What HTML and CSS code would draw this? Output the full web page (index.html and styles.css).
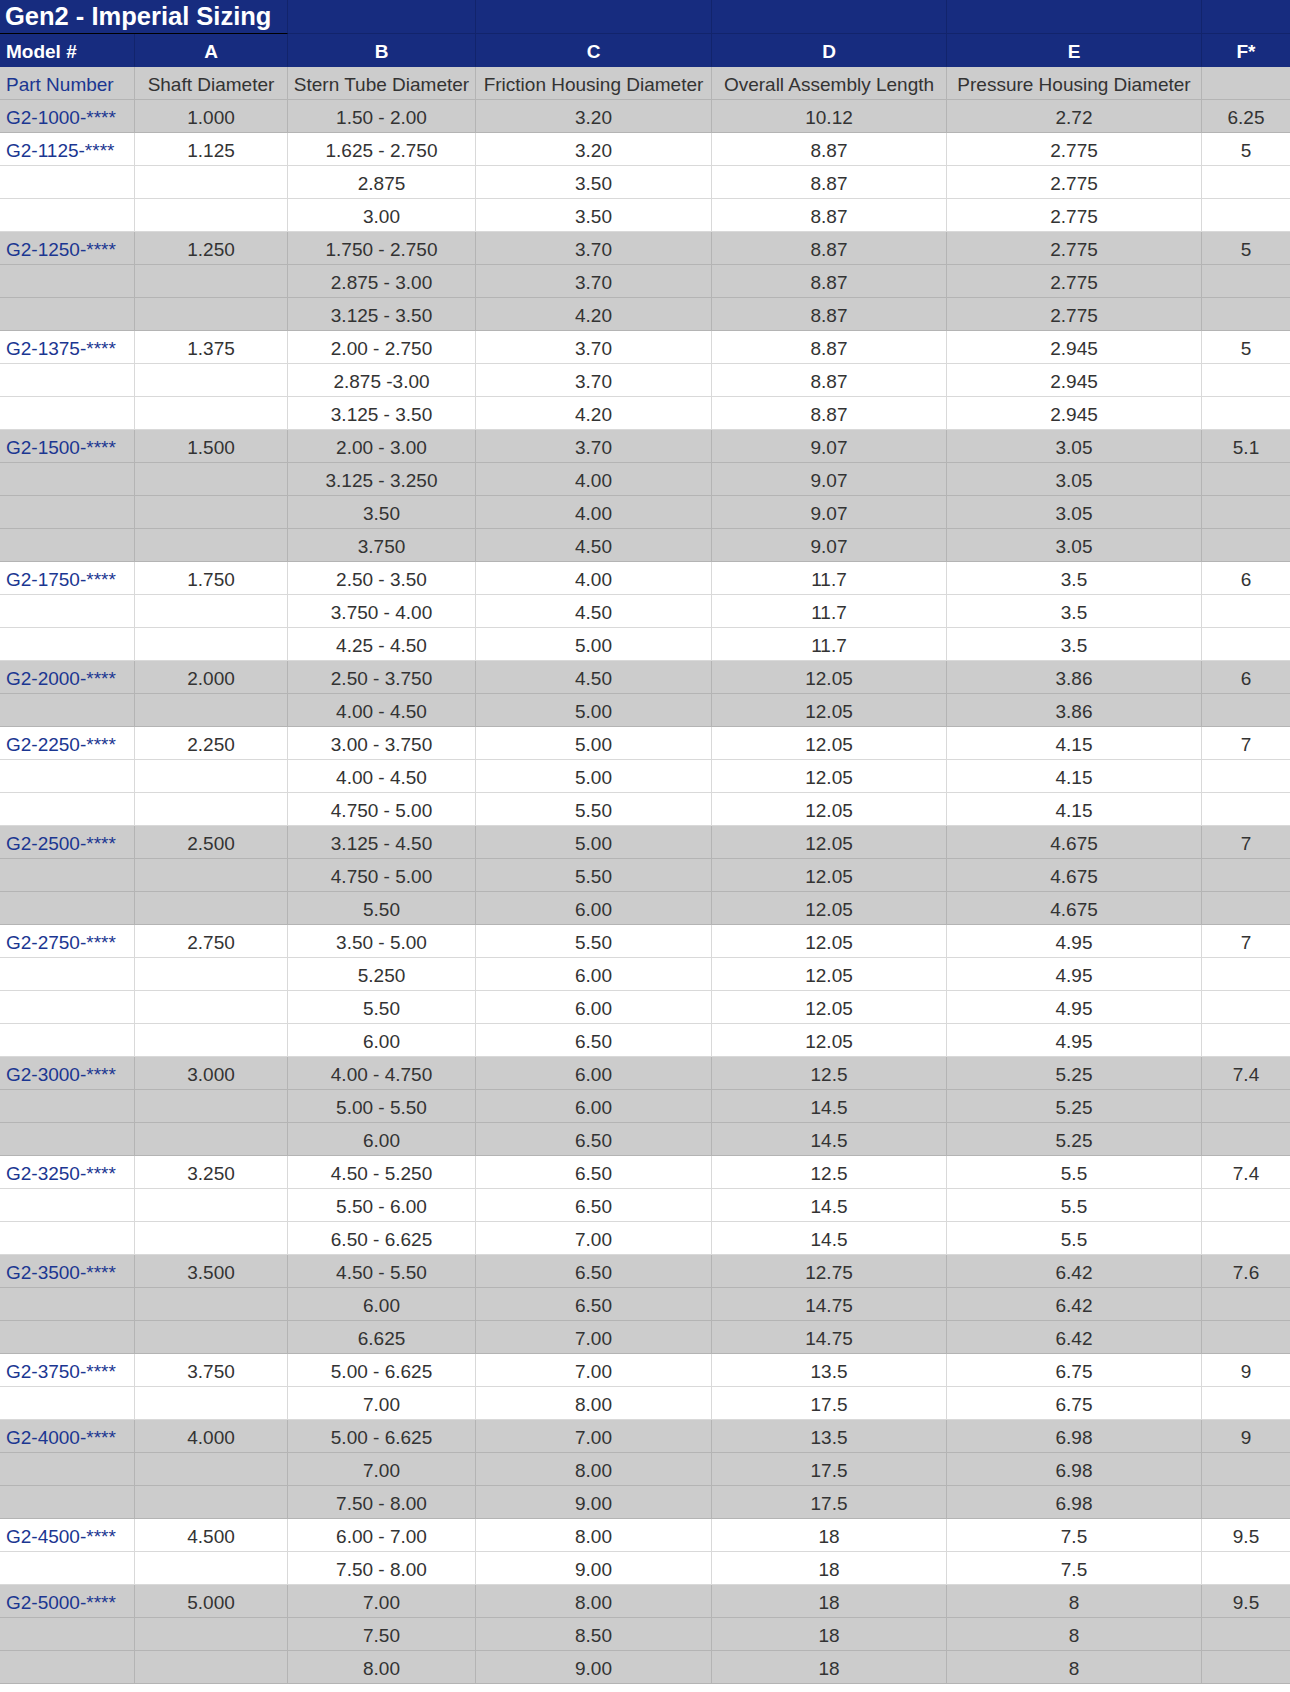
FILE: index.html
```html
<!DOCTYPE html>
<html>
<head>
<meta charset="utf-8">
<link rel="stylesheet" href="styles.css">
</head>
<body>
<div class="sheet">
  <div class="row title-row">
    <div class="c title">Gen2 - Imperial Sizing</div>
    <div class="c"></div><div class="c"></div><div class="c"></div><div class="c"></div><div class="c"></div>
  </div>
  <div class="row head-row">
    <div class="c left">Model #</div>
    <div class="c">A</div><div class="c">B</div><div class="c">C</div><div class="c">D</div><div class="c">E</div><div class="c">F*</div>
  </div>
  <div class="row g">
    <div class="c left pn">Part Number</div>
    <div class="c">Shaft Diameter</div><div class="c">Stern Tube Diameter</div><div class="c">Friction Housing Diameter</div><div class="c">Overall Assembly Length</div><div class="c">Pressure Housing Diameter</div><div class="c"></div>
  </div>

  <div class="row g"><div class="c left pn">G2-1000-****</div><div class="c">1.000</div><div class="c">1.50 - 2.00</div><div class="c">3.20</div><div class="c">10.12</div><div class="c">2.72</div><div class="c">6.25</div></div>

  <div class="row w"><div class="c left pn">G2-1125-****</div><div class="c">1.125</div><div class="c">1.625 - 2.750</div><div class="c">3.20</div><div class="c">8.87</div><div class="c">2.775</div><div class="c">5</div></div>
  <div class="row w"><div class="c left"></div><div class="c"></div><div class="c">2.875</div><div class="c">3.50</div><div class="c">8.87</div><div class="c">2.775</div><div class="c"></div></div>
  <div class="row w"><div class="c left"></div><div class="c"></div><div class="c">3.00</div><div class="c">3.50</div><div class="c">8.87</div><div class="c">2.775</div><div class="c"></div></div>

  <div class="row g"><div class="c left pn">G2-1250-****</div><div class="c">1.250</div><div class="c">1.750 - 2.750</div><div class="c">3.70</div><div class="c">8.87</div><div class="c">2.775</div><div class="c">5</div></div>
  <div class="row g"><div class="c left"></div><div class="c"></div><div class="c">2.875 - 3.00</div><div class="c">3.70</div><div class="c">8.87</div><div class="c">2.775</div><div class="c"></div></div>
  <div class="row g"><div class="c left"></div><div class="c"></div><div class="c">3.125 - 3.50</div><div class="c">4.20</div><div class="c">8.87</div><div class="c">2.775</div><div class="c"></div></div>

  <div class="row w"><div class="c left pn">G2-1375-****</div><div class="c">1.375</div><div class="c">2.00 - 2.750</div><div class="c">3.70</div><div class="c">8.87</div><div class="c">2.945</div><div class="c">5</div></div>
  <div class="row w"><div class="c left"></div><div class="c"></div><div class="c">2.875 -3.00</div><div class="c">3.70</div><div class="c">8.87</div><div class="c">2.945</div><div class="c"></div></div>
  <div class="row w"><div class="c left"></div><div class="c"></div><div class="c">3.125 - 3.50</div><div class="c">4.20</div><div class="c">8.87</div><div class="c">2.945</div><div class="c"></div></div>

  <div class="row g"><div class="c left pn">G2-1500-****</div><div class="c">1.500</div><div class="c">2.00 - 3.00</div><div class="c">3.70</div><div class="c">9.07</div><div class="c">3.05</div><div class="c">5.1</div></div>
  <div class="row g"><div class="c left"></div><div class="c"></div><div class="c">3.125 - 3.250</div><div class="c">4.00</div><div class="c">9.07</div><div class="c">3.05</div><div class="c"></div></div>
  <div class="row g"><div class="c left"></div><div class="c"></div><div class="c">3.50</div><div class="c">4.00</div><div class="c">9.07</div><div class="c">3.05</div><div class="c"></div></div>
  <div class="row g"><div class="c left"></div><div class="c"></div><div class="c">3.750</div><div class="c">4.50</div><div class="c">9.07</div><div class="c">3.05</div><div class="c"></div></div>

  <div class="row w"><div class="c left pn">G2-1750-****</div><div class="c">1.750</div><div class="c">2.50 - 3.50</div><div class="c">4.00</div><div class="c">11.7</div><div class="c">3.5</div><div class="c">6</div></div>
  <div class="row w"><div class="c left"></div><div class="c"></div><div class="c">3.750 - 4.00</div><div class="c">4.50</div><div class="c">11.7</div><div class="c">3.5</div><div class="c"></div></div>
  <div class="row w"><div class="c left"></div><div class="c"></div><div class="c">4.25 - 4.50</div><div class="c">5.00</div><div class="c">11.7</div><div class="c">3.5</div><div class="c"></div></div>

  <div class="row g"><div class="c left pn">G2-2000-****</div><div class="c">2.000</div><div class="c">2.50 - 3.750</div><div class="c">4.50</div><div class="c">12.05</div><div class="c">3.86</div><div class="c">6</div></div>
  <div class="row g"><div class="c left"></div><div class="c"></div><div class="c">4.00 - 4.50</div><div class="c">5.00</div><div class="c">12.05</div><div class="c">3.86</div><div class="c"></div></div>

  <div class="row w"><div class="c left pn">G2-2250-****</div><div class="c">2.250</div><div class="c">3.00 - 3.750</div><div class="c">5.00</div><div class="c">12.05</div><div class="c">4.15</div><div class="c">7</div></div>
  <div class="row w"><div class="c left"></div><div class="c"></div><div class="c">4.00 - 4.50</div><div class="c">5.00</div><div class="c">12.05</div><div class="c">4.15</div><div class="c"></div></div>
  <div class="row w"><div class="c left"></div><div class="c"></div><div class="c">4.750 - 5.00</div><div class="c">5.50</div><div class="c">12.05</div><div class="c">4.15</div><div class="c"></div></div>

  <div class="row g"><div class="c left pn">G2-2500-****</div><div class="c">2.500</div><div class="c">3.125 - 4.50</div><div class="c">5.00</div><div class="c">12.05</div><div class="c">4.675</div><div class="c">7</div></div>
  <div class="row g"><div class="c left"></div><div class="c"></div><div class="c">4.750 - 5.00</div><div class="c">5.50</div><div class="c">12.05</div><div class="c">4.675</div><div class="c"></div></div>
  <div class="row g"><div class="c left"></div><div class="c"></div><div class="c">5.50</div><div class="c">6.00</div><div class="c">12.05</div><div class="c">4.675</div><div class="c"></div></div>

  <div class="row w"><div class="c left pn">G2-2750-****</div><div class="c">2.750</div><div class="c">3.50 - 5.00</div><div class="c">5.50</div><div class="c">12.05</div><div class="c">4.95</div><div class="c">7</div></div>
  <div class="row w"><div class="c left"></div><div class="c"></div><div class="c">5.250</div><div class="c">6.00</div><div class="c">12.05</div><div class="c">4.95</div><div class="c"></div></div>
  <div class="row w"><div class="c left"></div><div class="c"></div><div class="c">5.50</div><div class="c">6.00</div><div class="c">12.05</div><div class="c">4.95</div><div class="c"></div></div>
  <div class="row w"><div class="c left"></div><div class="c"></div><div class="c">6.00</div><div class="c">6.50</div><div class="c">12.05</div><div class="c">4.95</div><div class="c"></div></div>

  <div class="row g"><div class="c left pn">G2-3000-****</div><div class="c">3.000</div><div class="c">4.00 - 4.750</div><div class="c">6.00</div><div class="c">12.5</div><div class="c">5.25</div><div class="c">7.4</div></div>
  <div class="row g"><div class="c left"></div><div class="c"></div><div class="c">5.00 - 5.50</div><div class="c">6.00</div><div class="c">14.5</div><div class="c">5.25</div><div class="c"></div></div>
  <div class="row g"><div class="c left"></div><div class="c"></div><div class="c">6.00</div><div class="c">6.50</div><div class="c">14.5</div><div class="c">5.25</div><div class="c"></div></div>

  <div class="row w"><div class="c left pn">G2-3250-****</div><div class="c">3.250</div><div class="c">4.50 - 5.250</div><div class="c">6.50</div><div class="c">12.5</div><div class="c">5.5</div><div class="c">7.4</div></div>
  <div class="row w"><div class="c left"></div><div class="c"></div><div class="c">5.50 - 6.00</div><div class="c">6.50</div><div class="c">14.5</div><div class="c">5.5</div><div class="c"></div></div>
  <div class="row w"><div class="c left"></div><div class="c"></div><div class="c">6.50 - 6.625</div><div class="c">7.00</div><div class="c">14.5</div><div class="c">5.5</div><div class="c"></div></div>

  <div class="row g"><div class="c left pn">G2-3500-****</div><div class="c">3.500</div><div class="c">4.50 - 5.50</div><div class="c">6.50</div><div class="c">12.75</div><div class="c">6.42</div><div class="c">7.6</div></div>
  <div class="row g"><div class="c left"></div><div class="c"></div><div class="c">6.00</div><div class="c">6.50</div><div class="c">14.75</div><div class="c">6.42</div><div class="c"></div></div>
  <div class="row g"><div class="c left"></div><div class="c"></div><div class="c">6.625</div><div class="c">7.00</div><div class="c">14.75</div><div class="c">6.42</div><div class="c"></div></div>

  <div class="row w"><div class="c left pn">G2-3750-****</div><div class="c">3.750</div><div class="c">5.00 - 6.625</div><div class="c">7.00</div><div class="c">13.5</div><div class="c">6.75</div><div class="c">9</div></div>
  <div class="row w"><div class="c left"></div><div class="c"></div><div class="c">7.00</div><div class="c">8.00</div><div class="c">17.5</div><div class="c">6.75</div><div class="c"></div></div>

  <div class="row g"><div class="c left pn">G2-4000-****</div><div class="c">4.000</div><div class="c">5.00 - 6.625</div><div class="c">7.00</div><div class="c">13.5</div><div class="c">6.98</div><div class="c">9</div></div>
  <div class="row g"><div class="c left"></div><div class="c"></div><div class="c">7.00</div><div class="c">8.00</div><div class="c">17.5</div><div class="c">6.98</div><div class="c"></div></div>
  <div class="row g"><div class="c left"></div><div class="c"></div><div class="c">7.50 - 8.00</div><div class="c">9.00</div><div class="c">17.5</div><div class="c">6.98</div><div class="c"></div></div>

  <div class="row w"><div class="c left pn">G2-4500-****</div><div class="c">4.500</div><div class="c">6.00 - 7.00</div><div class="c">8.00</div><div class="c">18</div><div class="c">7.5</div><div class="c">9.5</div></div>
  <div class="row w"><div class="c left"></div><div class="c"></div><div class="c">7.50 - 8.00</div><div class="c">9.00</div><div class="c">18</div><div class="c">7.5</div><div class="c"></div></div>

  <div class="row g"><div class="c left pn">G2-5000-****</div><div class="c">5.000</div><div class="c">7.00</div><div class="c">8.00</div><div class="c">18</div><div class="c">8</div><div class="c">9.5</div></div>
  <div class="row g"><div class="c left"></div><div class="c"></div><div class="c">7.50</div><div class="c">8.50</div><div class="c">18</div><div class="c">8</div><div class="c"></div></div>
  <div class="row g"><div class="c left"></div><div class="c"></div><div class="c">8.00</div><div class="c">9.00</div><div class="c">18</div><div class="c">8</div><div class="c"></div></div>
</div>
</body>
</html>
```

FILE: styles.css
```css
html, body {
  margin: 0;
  padding: 0;
  background: #ffffff;
}

.sheet {
  width: 1290px;
  font-family: "Liberation Sans", Arial, Helvetica, sans-serif;
  font-size: 19px;
  color: #333333;
}

.row {
  display: grid;
  grid-template-columns: 135px 153px 188px 236px 235px 255px 88px;
  height: 33px;
}

.c {
  box-sizing: border-box;
  height: 33px;
  padding: 3px 3px 0 3px;
  line-height: 30px;
  text-align: center;
  white-space: nowrap;
  overflow: hidden;
  border-right: 1px solid #d9d9d9;
  border-bottom: 1px solid #d9d9d9;
}

.c:last-child {
  border-right: none;
}

.c.left {
  text-align: left;
  padding-left: 6px;
}

.pn {
  color: #1b3691;
}

/* gray group rows */
.g .c {
  background: #cccccc;
  border-right-color: #b4b4b4;
  border-bottom-color: #b4b4b4;
}

/* white group rows */
.w .c {
  background: #ffffff;
}

/* title row */
.title-row {
  height: 34px;
}

.title-row .c {
  height: 34px;
  background: #172c7f;
  border-right-color: #12246c;
  border-bottom-color: #12246c;
}

.title-row .title {
  grid-column: span 2;
  color: #ffffff;
  font-weight: bold;
  font-size: 25.5px;
  text-align: left;
  padding: 0 0 0 5px;
  line-height: 32px;
  border-bottom-color: #000000;
}

/* header letters row */
.head-row .c {
  background: #172c7f;
  color: #ffffff;
  font-weight: bold;
  padding-top: 3px;
  border-right-color: #12246c;
  border-bottom-color: #172c7f;
}
```
